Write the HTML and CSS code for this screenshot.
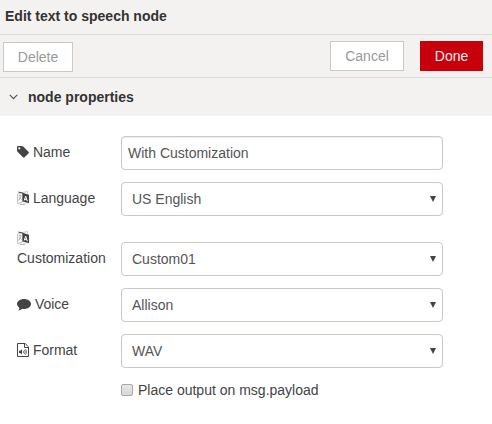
FILE: index.html
```html
<!DOCTYPE html>
<html lang="en">
<head>
<meta charset="utf-8">
<title>Edit text to speech node</title>
<link rel="stylesheet" href="styles.css">
</head>
<body>
<svg class="defs" width="0" height="0" aria-hidden="true">
  <symbol id="language" viewBox="0 0 12 14">
    <path class="page" d="M.5 3 5.5 1.2v9.8L.5 12.5zM5.5 1.6 10.6.5v2"/>
    <path class="line" d="M1.6 5l2.8-.9M3 3.6v1.2M4.2 5.2 1.8 9.5M2.2 6.4l2.4 2.2M2.8 13.3h4.4l1.4-1"/>
    <path class="solid" d="M1.4.4 6 1.8v1L1.4 1.4zM5.4 1.8 12 3.8v8.4L5.4 10.4z"/>
    <path class="cut" d="M7.2 9.5 8.7 5.2l1.6 5.1M7.8 8.2l2 .5"/>
  </symbol>
</svg>
<header class="title">Edit text to speech node</header>
<div class="toolbar">
  <button class="button delete">Delete</button>
  <button class="button cancel">Cancel</button>
  <button class="button done">Done</button>
</div>
<div class="section">
  <svg class="chevron" viewBox="0 0 9 6"><path d="M.8.9 4.5 4.6 8.2.9"/></svg>
  <span>node properties</span>
</div>
<form class="form">
  <div class="row">
    <label class="label"><svg class="icon" viewBox="0 0 12 14"><path class="solid" fill-rule="evenodd" d="M0 2.1Q0 1 1.1 1h3.6q.8 0 1.5.6l5.3 5.2q.7.8 0 1.6l-3.9 3.9q-.8.7-1.6 0L.7 7Q0 6.3 0 5.5zM2.3 2.2a1.1 1.1 0 1 0 0 2.2 1.1 1.1 0 0 0 0-2.2z"/></svg> Name</label>
    <div class="field input">With Customization</div>
  </div>
  <div class="row">
    <label class="label"><svg class="icon"><use href="#language"/></svg> Language</label>
    <div class="field select">US English<svg class="arrow" viewBox="0 0 6 6"><path d="M0 0h6L3 6z"/></svg></div>
  </div>
  <div class="row">
    <label class="label"><svg class="icon"><use href="#language"/></svg> Customization</label>
    <div class="field select">Custom01<svg class="arrow" viewBox="0 0 6 6"><path d="M0 0h6L3 6z"/></svg></div>
  </div>
  <div class="row">
    <label class="label"><svg class="icon wide" viewBox="0 0 14 14"><path class="solid" d="M7 2c3.9 0 7 2.2 7 5s-3.1 5-7 5q-1 0-1.8-.2-1.5 1.4-3.9 1.7 1.1-1.2 1.2-2.6Q0 9.4 0 7c0-2.8 3.1-5 7-5z"/></svg> Voice</label>
    <div class="field select">Allison<svg class="arrow" viewBox="0 0 6 6"><path d="M0 0h6L3 6z"/></svg></div>
  </div>
  <div class="row">
    <label class="label"><svg class="icon" viewBox="0 0 12 14"><path class="outline" d="M.5.5h7.6l3.4 3.4v9.6H.5zM7.5.5v4h4"/><path class="solid" d="M2 7.8h1.2L5 6.3v5.2L3.2 10H2z"/><path class="outline thin" d="M6.2 7.7q1 1.2 0 2.4M7.3 6.7q1.8 2.2 0 4.4M8.5 6q2.2 3 0 6"/></svg> Format</label>
    <div class="field select">WAV<svg class="arrow" viewBox="0 0 6 6"><path d="M0 0h6L3 6z"/></svg></div>
  </div>
  <div class="check"><span class="box"></span><span>Place output on msg.payload</span></div>
</form>
</body>
</html>
```
FILE: styles.css
```css
* { box-sizing: border-box; }
body {
  margin: 0;
  background: #fff;
  color: #444;
  font: 14px/20px "Liberation Sans", Arial, sans-serif;
}
.defs { display: block; }
.title {
  height: 35px;
  padding: 6px 5px;
  background: #f3f2f0;
  border-bottom: 1px solid #dddcd8;
  color: #333;
  font-weight: bold;
}
.toolbar {
  display: flex;
  align-items: flex-start;
  height: 43px;
  padding: 6px 9px 0 3px;
  background: #f3f2f0;
  border-bottom: 1px solid #dddcd8;
}
.button {
  height: 30px;
  padding: 0;
  border: 1px solid #ccc9c3;
  border-radius: 0;
  background: #fff;
  color: #999;
  font: inherit;
}
.delete { width: 70px; margin-top: 1px; }
.cancel { width: 74px; margin-left: auto; }
.done {
  width: 63px;
  margin-left: 16px;
  border-color: #c7000b;
  background: #c7000b;
  color: #eee;
}
.section {
  display: flex;
  align-items: center;
  gap: 10px;
  height: 38px;
  padding-left: 9px;
  background: #f3f2f0;
  color: #333;
  font-weight: bold;
}
.chevron {
  width: 9px;
  height: 6px;
  fill: none;
  stroke: #555;
  stroke-width: 1.2;
}
.form {
  display: flex;
  flex-direction: column;
  gap: 12px;
  padding: 20px 49px 0 17px;
}
.row {
  display: grid;
  grid-template-columns: 90px 322px;
  column-gap: 14px;
  align-items: end;
}
.label { padding-bottom: 8px; }
.icon {
  display: inline-block;
  width: 12px;
  height: 14px;
  vertical-align: -2px;
}
.wide { width: 14px; }
.solid { fill: #444; }
.page { fill: #fff; stroke: #aaa; stroke-width: .7; }
.line { fill: none; stroke: #999; stroke-width: .8; }
.cut { fill: none; stroke: #fff; stroke-width: 1; }
.outline { fill: none; stroke: #444; stroke-width: 1; }
.thin { stroke-width: .7; }
.field {
  display: flex;
  align-items: center;
  height: 34px;
  border: 1px solid #ccc9c3;
  border-radius: 4px;
  background: #fff;
  color: #555;
}
.input {
  padding: 0 6px;
  box-shadow: inset 0 1px 1px rgba(0, 0, 0, .075);
}
.select { padding: 0 6px 0 10px; }
.arrow {
  width: 6px;
  height: 6px;
  margin-left: auto;
  fill: #444;
}
.check {
  display: flex;
  align-items: center;
  gap: 5px;
  padding-left: 104px;
}
.box {
  width: 12px;
  height: 12px;
  border: 1px solid #aaa8a4;
  border-radius: 2px;
  background: linear-gradient(#e8e7e5, #d9d8d6);
}
```
